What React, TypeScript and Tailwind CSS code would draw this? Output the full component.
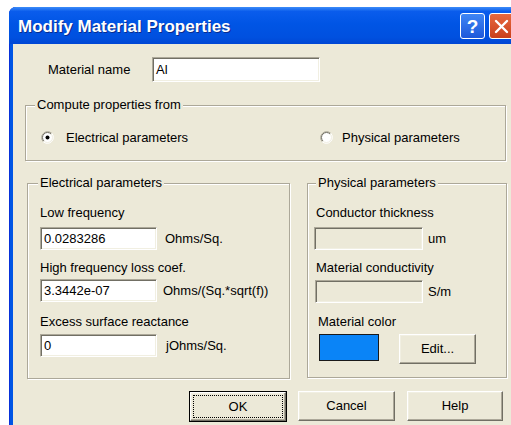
import type { ReactNode } from "react";

const font = "font-['Liberation_Sans',Arial,sans-serif]";

function Radio({ checked }: { checked?: boolean }) {
  return (
    <svg width="13" height="13" viewBox="0 0 13 13" className="shrink-0">
      <circle cx="6.5" cy="6.5" r="5.5" fill="#fff" />
      <path d="M2.26 10.74 A6 6 0 0 1 10.74 2.26" stroke="#ACA899" fill="none" />
      <path d="M10.74 2.26 A6 6 0 0 1 2.26 10.74" stroke="#fff" fill="none" />
      <path d="M2.96 10.04 A5 5 0 0 1 10.04 2.96" stroke="#716F64" fill="none" />
      <path d="M10.04 2.96 A5 5 0 0 1 2.96 10.04" stroke="#F1EFE2" fill="none" />
      {checked && <circle cx="6.5" cy="6.5" r="2" fill="#000" />}
    </svg>
  );
}

function Field({ value = "", width, disabled }: { value?: string; width: string; disabled?: boolean }) {
  return (
    <div
      className={`${width} h-[23px] shrink-0 flex items-center px-[3px] border border-t-[#ACA899] border-l-[#ACA899] border-b-white border-r-white shadow-[inset_1px_1px_0_#716F64,inset_-1px_-1px_0_#F1EFE2] ${
        disabled ? "bg-[#ECE9D8]" : "bg-white"
      }`}
    >
      {value}
    </div>
  );
}

function Raised({ children, className = "" }: { children: ReactNode; className?: string }) {
  return (
    <div
      className={`flex items-center justify-center bg-[#ECE9D8] border border-t-white border-l-white border-b-[#716F64] border-r-[#716F64] shadow-[inset_-1px_-1px_0_#ACA899,inset_1px_1px_0_#F1EFE2] ${className}`}
    >
      {children}
    </div>
  );
}

function Group({ title, className, titleMargin, children }: { title: string; className: string; titleMargin: string; children: ReactNode }) {
  return (
    <div className={`flex flex-col border border-[#ACA899] shadow-[inset_1px_1px_0_#fff,1px_1px_0_#fff] ${className}`}>
      <span className={`-mt-[9px] ${titleMargin} self-start bg-[#ECE9D8] px-[2px] leading-[16px]`}>{title}</span>
      {children}
    </div>
  );
}

export default function App() {
  return (
    <div className={`w-[511px] h-[425px] overflow-hidden bg-white ${font} text-[13px] leading-[16px] text-black`}>
      <div className="ml-[9px] mt-[7px] w-[520px] h-[430px] flex flex-col rounded-t-[7px] bg-[#0055E5] shadow-[inset_1px_0_0_#0831D9]">
        {/* title bar */}
        <div className="h-[37px] flex items-start rounded-t-[7px] bg-[linear-gradient(to_bottom,#3C8CF8_0%,#0A5CEC_12%,#0055E5_45%,#0050DF_82%,#0046D4_100%)]">
          <span className="ml-[9px] pt-[10px] text-[17px] leading-[20px] font-bold text-white [text-shadow:1px_1px_0_#0A2C8C]">
            Modify Material Properties
          </span>
          <div className="ml-auto mr-[15px] mt-[6px] flex gap-[4px]">
            <div className="w-[25px] h-[26px] rounded-[3px] border border-white bg-[linear-gradient(to_bottom,#3F86F5,#1D58DA)] flex items-center justify-center text-white text-[19px] font-bold leading-none">
              ?
            </div>
            <div className="w-[25px] h-[26px] rounded-[3px] border border-white bg-[linear-gradient(to_bottom,#E8693F,#C9401B)] flex items-center justify-center">
              <svg width="15" height="15" viewBox="0 0 15 15">
                <path d="M2 2 L13 13 M13 2 L2 13" stroke="#fff" strokeWidth="2.4" strokeLinecap="round" />
              </svg>
            </div>
          </div>
        </div>

        {/* client area */}
        <div className="flex-1 ml-[4px] bg-[#ECE9D8] flex flex-col pt-[13px]">
          <div className="ml-[35px] h-[25px] flex items-center">
            <span className="w-[104px]">Material name</span>
            <div className="w-[168px] h-[25px] flex items-center px-[3px] bg-white border border-t-[#ACA899] border-l-[#ACA899] border-b-white border-r-white shadow-[inset_1px_1px_0_#716F64,inset_-1px_-1px_0_#F1EFE2]">
              Al
            </div>
          </div>

          <Group title="Compute properties from" className="mt-[23px] ml-[12px] w-[481px] h-[56px]" titleMargin="ml-[9px]">
            <div className="mt-[18px] pl-[15px] h-[13px] flex items-center">
              <div className="w-[279px] flex items-center gap-[12px]">
                <Radio checked />
                <span>Electrical parameters</span>
              </div>
              <div className="flex items-center gap-[9px]">
                <Radio />
                <span>Physical parameters</span>
              </div>
            </div>
          </Group>

          <div className="mt-[22px] ml-[14px] flex items-start">
            <Group title="Electrical parameters" className="w-[263px] h-[196px]" titleMargin="ml-[10px]">
              <span className="mt-[14px] ml-[12px]">Low frequency</span>
              <div className="mt-[6px] ml-[12px] flex items-center">
                <Field value="0.0283286" width="w-[117px]" />
                <span className="ml-[8px]">Ohms/Sq.</span>
              </div>
              <span className="mt-[10px] ml-[12px]">High frequency loss coef.</span>
              <div className="mt-[3px] ml-[12px] flex items-center">
                <Field value="3.3442e-07" width="w-[117px]" />
                <span className="ml-[6px]">Ohms/(Sq.*sqrt(f))</span>
              </div>
              <span className="mt-[12px] ml-[12px]">Excess surface reactance</span>
              <div className="mt-[4px] ml-[12px] flex items-center">
                <Field value="0" width="w-[117px]" />
                <span className="ml-[9px]">jOhms/Sq.</span>
              </div>
            </Group>

            <Group title="Physical parameters" className="ml-[17px] w-[200px] h-[195px]" titleMargin="ml-[8px]">
              <span className="mt-[14px] ml-[8px]">Conductor thickness</span>
              <div className="mt-[6px] ml-[6px] flex items-center">
                <Field width="w-[109px]" disabled />
                <span className="ml-[5px]">um</span>
              </div>
              <span className="mt-[10px] ml-[8px]">Material conductivity</span>
              <div className="mt-[4px] ml-[7px] flex items-center">
                <Field width="w-[108px]" disabled />
                <span className="ml-[5px]">S/m</span>
              </div>
              <span className="mt-[11px] ml-[10px]">Material color</span>
              <div className="mt-[4px] ml-[11px] flex items-start">
                <div className="w-[60px] h-[27px] border border-[#1a1a1a] bg-[#0A84F7]" />
                <Raised className="ml-[20px] w-[77px] h-[30px]">Edit...</Raised>
              </div>
            </Group>
          </div>

          <div className="mt-[12px] ml-[176px] flex">
            <div className="w-[98px] h-[31px] border border-black flex">
              <Raised className="flex-1">
                <div className="m-[2px] flex-1 self-stretch flex items-center justify-center border border-dotted border-black">OK</div>
              </Raised>
            </div>
            <Raised className="ml-[11px] w-[97px] h-[30px]">Cancel</Raised>
            <Raised className="ml-[12px] w-[96px] h-[30px]">Help</Raised>
          </div>
        </div>
      </div>
    </div>
  );
}
